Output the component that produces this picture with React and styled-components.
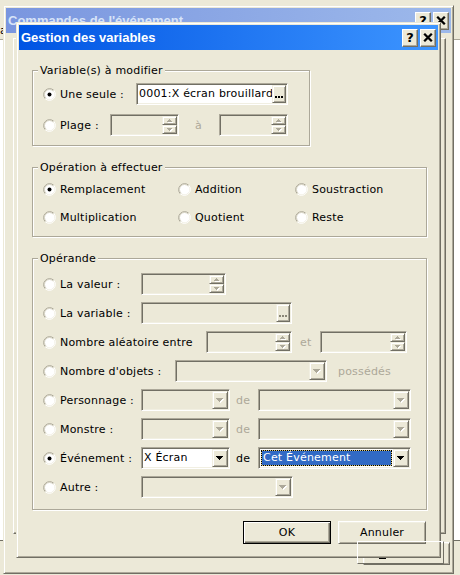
import React from 'react';
import styled, { createGlobalStyle } from 'styled-components';

const C = {
  face: '#ece9d8',
  light: '#f1efe2',
  hi: '#ffffff',
  shadow: '#aca899',
  dark: '#716f64',
  sel: '#316ac5',
};

const GlobalStyle = createGlobalStyle`
  html, body { margin: 0; padding: 0; }
  body {
    background: ${C.face};
    font-family: "DejaVu Sans", Verdana, sans-serif;
    font-size: 11px;
    letter-spacing: 0.2px;
    color: #000;
    overflow: hidden;
  }
`;

const Desktop = styled.div`
  position: relative;
  width: 460px;
  height: 575px;
  overflow: hidden;
  background: ${C.face};
`;

/* the application sitting behind both dialogs */
const BehindApp = styled.div`
  position: absolute;
  left: 0;
  right: 0;
  top: 39px;
  height: 500px;
  background: #fff;
  border-top: 1px solid ${C.shadow};
  border-bottom: 1px solid ${C.dark};
`;

const StrayText = styled.span`
  position: absolute;
  left: 0;
  top: 24px;
  line-height: 13px;
`;

const Window = styled.div`
  position: absolute;
  left: ${(p) => p.$x}px;
  top: ${(p) => p.$y}px;
  width: ${(p) => p.$w}px;
  height: ${(p) => p.$h}px;
  box-sizing: border-box;
  display: flex;
  flex-direction: column;
  padding: 2px;
  background: ${C.face};
  border: 1px solid;
  border-color: ${C.face} ${C.dark} ${C.dark} ${C.face};
  box-shadow: inset 1px 1px ${C.hi}, inset -1px -1px ${C.shadow};
`;

const TitleBar = styled.div`
  flex: none;
  height: 25px;
  display: flex;
  align-items: center;
  gap: 2px;
  padding: 0 2px;
  background: linear-gradient(
    to right,
    ${(p) => (p.$active ? '#0054e3' : '#7a96df')},
    ${(p) => (p.$active ? '#3d95ff' : '#9db9eb')}
  );
  color: ${(p) => (p.$active ? '#fff' : '#d8e4f8')};
`;

const TitleText = styled.span`
  flex: 1;
  font: bold 13px "Liberation Sans", Arial, sans-serif;
  letter-spacing: 0;
  white-space: nowrap;
  overflow: hidden;
`;

const CaptionBtn = styled.span`
  box-sizing: border-box;
  flex: none;
  width: 16px;
  height: 18px;
  display: flex;
  align-items: center;
  justify-content: center;
  background: ${C.face};
  border: 1px solid;
  border-color: ${C.hi} ${C.dark} ${C.dark} ${C.hi};
  box-shadow: inset -1px -1px ${C.shadow};
  color: #000;
  font: bold 13px "DejaVu Sans", sans-serif;
  line-height: 1;
`;

const BackBody = styled.div`
  flex: 1;
  display: flex;
  flex-direction: column;
  align-items: flex-start;
  padding: 5px 0 0 7px;
`;

const TabPage = styled.div`
  box-sizing: border-box;
  width: 433px;
  height: 496px;
  border: 1px solid;
  border-color: ${C.hi} ${C.dark} ${C.dark} ${C.hi};
  box-shadow: inset -1px -1px ${C.shadow};
`;

const BackButtons = styled.div`
  display: flex;
  width: 437px;
  justify-content: flex-end;
  margin-top: 8px;
`;

const Body = styled.div`
  flex: 1;
  display: flex;
  flex-direction: column;
  align-items: flex-start;
  padding: 20px 0 0 13px;
`;

const Group = styled.div`
  position: relative;
  box-sizing: border-box;
  width: ${(p) => p.$w}px;
  height: ${(p) => p.$h}px;
  margin-top: ${(p) => p.$mt || 0}px;
  padding: ${(p) => p.$pt}px 0 0 10px;
  border: 1px solid ${C.shadow};
  box-shadow: inset 1px 1px ${C.hi}, 1px 1px ${C.hi};
  display: flex;
  flex-direction: column;
  gap: ${(p) => p.$gap}px;
`;

const Legend = styled.span`
  position: absolute;
  top: -7px;
  left: 5px;
  padding: 0 2px;
  background: ${C.face};
  line-height: 13px;
  white-space: nowrap;
`;

const OpGrid = styled.div`
  display: grid;
  grid-template-columns: 135px 117px auto;
  row-gap: 12px;
`;

const Row = styled.div`
  display: flex;
  align-items: center;
  height: 22px;
`;

const Choice = styled.label`
  flex: none;
  display: flex;
  align-items: center;
  gap: 4px;
  height: 16px;
  width: ${(p) => (p.$w ? `${p.$w}px` : 'auto')};
  white-space: nowrap;
`;

const Sep = styled.span`
  flex: none;
  box-sizing: border-box;
  width: ${(p) => (p.$w ? `${p.$w}px` : 'auto')};
  padding-left: ${(p) => p.$pl}px;
  color: ${(p) => (p.$off ? C.shadow : '#000')};
  white-space: nowrap;
`;

const Field = styled.div`
  box-sizing: border-box;
  flex: none;
  width: ${(p) => p.$w}px;
  height: 22px;
  display: flex;
  align-items: stretch;
  padding: 1px;
  border: 1px solid;
  border-color: ${C.shadow} ${C.hi} ${C.hi} ${C.shadow};
  box-shadow: inset 1px 1px ${C.dark}, inset -1px -1px ${C.light};
  background: ${(p) => (p.$off ? C.face : C.hi)};
`;

const Value = styled.span`
  flex: 1;
  min-width: 0;
  padding-left: 1px;
  line-height: 18px;
  white-space: nowrap;
  overflow: hidden;
`;

const Selected = styled.span`
  flex: 1;
  min-width: 0;
  margin: 1px;
  padding-left: 2px;
  line-height: 16px;
  color: #fff;
  background: ${C.sel};
  box-shadow: inset 0 0 0 1px #d9c77a;
  outline: 1px dotted #000;
  outline-offset: -1px;
  white-space: nowrap;
  overflow: hidden;
`;

const Bevel = styled.span`
  box-sizing: border-box;
  flex: ${(p) => (p.$grow ? 1 : 'none')};
  width: ${(p) => p.$w}px;
  display: flex;
  align-items: center;
  justify-content: center;
  background: ${C.face};
  border: 1px solid;
  border-color: ${C.light} ${C.dark} ${C.dark} ${C.light};
  box-shadow: inset 1px 1px ${C.hi}, inset -1px -1px ${C.shadow};
`;

const SpinCol = styled.span`
  flex: none;
  width: 15px;
  display: flex;
  flex-direction: column;
`;

const Button = styled.div`
  box-sizing: border-box;
  width: ${(p) => p.$w || 88}px;
  height: 23px;
  display: flex;
  align-items: center;
  justify-content: center;
  background: ${C.face};
  border: 1px solid;
  border-color: ${(p) => (p.$default ? '#000' : `${C.hi} ${C.dark} ${C.dark} ${C.hi}`)};
  box-shadow: ${(p) =>
    p.$default
      ? `inset 1px 1px ${C.hi}, inset -1px -1px ${C.dark}, inset -2px -2px ${C.shadow}`
      : `inset 1px 1px ${C.light}, inset -1px -1px ${C.shadow}`};
`;

const ButtonRow = styled.div`
  display: flex;
  justify-content: flex-end;
  gap: 7px;
  width: 394px;
  margin-top: 11px;
`;

/* leftover of the back dialog's button, not repainted over the front one */
const Ghost = styled.div`
  position: absolute;
  left: 357px;
  top: 541px;
  width: 87px;
  height: 23px;
  box-sizing: border-box;
  border-top: 1px solid ${C.hi};
  border-left: 1px solid ${C.hi};
  border-right: 1px solid ${C.dark};
  border-bottom: 1px solid ${C.dark};
  pointer-events: none;
`;

const Underline = styled.span`
  position: absolute;
  left: 21px;
  top: 16px;
  width: 7px;
  height: 1px;
  background: #000;
`;

const UP = [[2, 1], [1, 3], [0, 5]];
const DOWN = [[0, 5], [1, 3], [2, 1]];
const DROP = [[0, 7], [1, 5], [2, 3], [3, 1]];

function Arrow({ rows, off }) {
  const w = Math.max(...rows.map(([x, n]) => x + n));
  return (
    <svg width={w + 1} height={rows.length + 1} shapeRendering="crispEdges">
      {off &&
        rows.map(([x, n], i) => (
          <rect key={`s${i}`} x={x + 1} y={i + 1} width={n} height={1} fill="#fff" />
        ))}
      {rows.map(([x, n], i) => (
        <rect key={i} x={x} y={i} width={n} height={1} fill={off ? C.shadow : '#000'} />
      ))}
    </svg>
  );
}

function Dots({ off }) {
  const fill = off ? '#8a8778' : '#000';
  return (
    <svg width="8" height="2" shapeRendering="crispEdges" style={{ marginTop: 5 }}>
      <rect x="0" y="0" width="2" height="2" fill={fill} />
      <rect x="3" y="0" width="2" height="2" fill={fill} />
      <rect x="6" y="0" width="2" height="2" fill={fill} />
    </svg>
  );
}

function CloseGlyph() {
  return (
    <svg width="10" height="9" viewBox="0 0 10 9">
      <path d="M1.2 0.8 L8.8 8.2 M8.8 0.8 L1.2 8.2" stroke="#000" strokeWidth="2.3" />
    </svg>
  );
}

function Radio({ checked }) {
  return (
    <svg width="13" height="13" viewBox="0 0 13 13">
      <circle cx="6.5" cy="6.5" r="5" fill="#fff" />
      <path d="M2.26 10.74 A6 6 0 0 1 10.74 2.26" fill="none" stroke={C.shadow} />
      <path d="M10.74 2.26 A6 6 0 0 1 2.26 10.74" fill="none" stroke="#fff" />
      <path d="M2.96 10.04 A5 5 0 0 1 10.04 2.96" fill="none" stroke="#d5d2c3" />
      {checked && <circle cx="6.5" cy="6.5" r="2" fill="#000" />}
    </svg>
  );
}

function Caption() {
  return (
    <>
      <CaptionBtn>?</CaptionBtn>
      <CaptionBtn>
        <CloseGlyph />
      </CaptionBtn>
    </>
  );
}

function Spin({ w, off = true }) {
  return (
    <Field $w={w} $off={off}>
      <Value />
      <SpinCol>
        <Bevel $grow>
          <Arrow rows={UP} off={off} />
        </Bevel>
        <Bevel $grow>
          <Arrow rows={DOWN} off={off} />
        </Bevel>
      </SpinCol>
    </Field>
  );
}

function Combo({ w, off = true, text, selected }) {
  return (
    <Field $w={w} $off={off}>
      {selected ? <Selected>{text}</Selected> : <Value>{text}</Value>}
      <Bevel $w={16}>
        <Arrow rows={DROP} off={off} />
      </Bevel>
    </Field>
  );
}

function Picker({ w, off = true, text }) {
  return (
    <Field $w={w} $off={off}>
      <Value>{text}</Value>
      <Bevel $w={14}>
        <Dots off={off} />
      </Bevel>
    </Field>
  );
}

const operations = [
  ['Remplacement', true],
  ['Addition'],
  ['Soustraction'],
  ['Multiplication'],
  ['Quotient'],
  ['Reste'],
];

export default function App() {
  return (
    <>
      <GlobalStyle />
      <Desktop>
        <BehindApp />
        <StrayText>a</StrayText>

        <Window $x={3} $y={5} $w={451} $h={569}>
          <TitleBar>
            <TitleText>Commandes de l'événement</TitleText>
            <Caption />
          </TitleBar>
          <BackBody>
            <TabPage />
            <BackButtons>
              <Button $w={87} />
            </BackButtons>
          </BackBody>
        </Window>

        <Window $x={16} $y={22} $w={425} $h={536}>
          <TitleBar $active>
            <TitleText>Gestion des variables</TitleText>
            <Caption />
          </TitleBar>
          <Body>
            <Group $w={278} $h={76} $pt={12} $gap={9}>
              <Legend>Variable(s) à modifier</Legend>
              <Row>
                <Choice $w={93}>
                  <Radio checked />
                  Une seule :
                </Choice>
                <Picker w={152} off={false} text="0001:X écran brouillard" />
              </Row>
              <Row>
                <Choice $w={67}>
                  <Radio />
                  Plage :
                </Choice>
                <Spin w={69} />
                <Sep $w={40} $pl={16} $off>
                  à
                </Sep>
                <Spin w={69} />
              </Row>
            </Group>

            <Group $w={395} $h={70} $mt={21} $pt={13} $gap={0}>
              <Legend>Opération à effectuer</Legend>
              <OpGrid>
                {operations.map(([label, checked]) => (
                  <Choice key={label}>
                    <Radio checked={checked} />
                    {label}
                  </Choice>
                ))}
              </OpGrid>
            </Group>

            <Group $w={395} $h={252} $mt={21} $pt={14} $gap={7}>
              <Legend>Opérande</Legend>
              <Row>
                <Choice $w={98}>
                  <Radio />
                  La valeur :
                </Choice>
                <Spin w={85} />
              </Row>
              <Row>
                <Choice $w={98}>
                  <Radio />
                  La variable :
                </Choice>
                <Picker w={151} />
              </Row>
              <Row>
                <Choice $w={163}>
                  <Radio />
                  Nombre aléatoire entre
                </Choice>
                <Spin w={86} />
                <Sep $w={28} $pl={8} $off>
                  et
                </Sep>
                <Spin w={87} />
              </Row>
              <Row>
                <Choice $w={132}>
                  <Radio />
                  Nombre d'objets :
                </Choice>
                <Combo w={152} />
                <Sep $pl={11} $off>
                  possédés
                </Sep>
              </Row>
              <Row>
                <Choice $w={98}>
                  <Radio />
                  Personnage :
                </Choice>
                <Combo w={89} />
                <Sep $w={28} $pl={6} $off>
                  de
                </Sep>
                <Combo w={153} />
              </Row>
              <Row>
                <Choice $w={98}>
                  <Radio />
                  Monstre :
                </Choice>
                <Combo w={89} />
                <Sep $w={28} $pl={6} $off>
                  de
                </Sep>
                <Combo w={153} />
              </Row>
              <Row>
                <Choice $w={98}>
                  <Radio checked />
                  Événement :
                </Choice>
                <Combo w={89} off={false} text="X Écran" />
                <Sep $w={28} $pl={6}>
                  de
                </Sep>
                <Combo w={153} off={false} text="Cet Événement" selected />
              </Row>
              <Row>
                <Choice $w={98}>
                  <Radio />
                  Autre :
                </Choice>
                <Combo w={152} />
              </Row>
            </Group>

            <ButtonRow>
              <Button $default>OK</Button>
              <Button>Annuler</Button>
            </ButtonRow>
          </Body>
        </Window>

        <Ghost>
          <Underline />
        </Ghost>
      </Desktop>
    </>
  );
}
